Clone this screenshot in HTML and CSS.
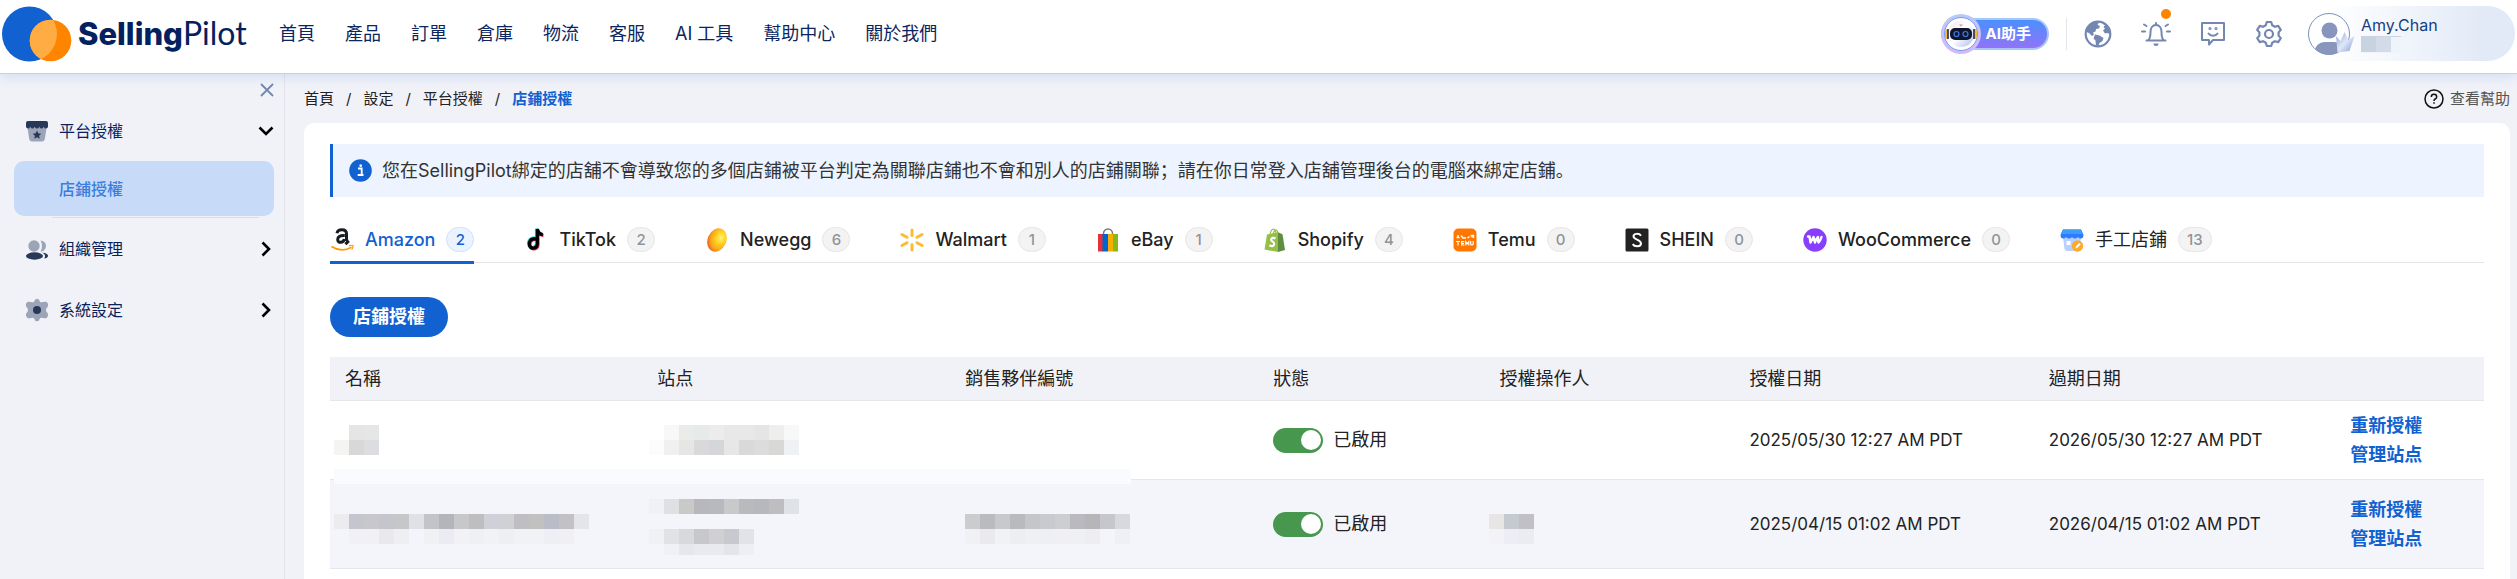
FILE: index.html
```html
<!DOCTYPE html>
<html lang="zh-Hant">
<head>
<meta charset="utf-8">
<title>店鋪授權 - SellingPilot</title>
<link rel="stylesheet" href="styles.css">
</head>
<body>
<header class="topbar">
  <a class="logo" href="#" aria-label="SellingPilot">
    <svg class="logo-mark" width="70" height="56" viewBox="0 0 70 56">
      <defs><clipPath id="blueClip"><circle cx="27.500" cy="28" r="27.500"/></clipPath></defs>
      <circle cx="27.500" cy="28" r="27.500" fill="#1161d0"/>
      <circle cx="48.500" cy="34.500" r="20.800" fill="#ff8400"/>
      <circle cx="48.500" cy="34.500" r="20.800" fill="#ffac45" clip-path="url(#blueClip)"/>
    </svg>
    <span class="logo-text"><b>Selling</b><span class="logo-light">Pilot</span></span>
  </a>
  <nav class="nav">
    <a href="#">首頁</a><a href="#">產品</a><a href="#">訂單</a><a href="#">倉庫</a><a href="#">物流</a><a href="#">客服</a><a href="#">AI 工具</a><a href="#">幫助中心</a><a href="#">關於我們</a>
  </nav>
  <div class="tools">
    <button class="ai" type="button">
      <svg class="ai-bot" width="40" height="40" viewBox="0 0 40 40">
        <defs>
          <linearGradient id="ring" x1="0" y1="0" x2="0" y2="1"><stop offset="0" stop-color="#b9c9f7"/><stop offset="1" stop-color="#d6b9f4"/></linearGradient>
          <linearGradient id="skin" x1="0" y1="0" x2="1" y2="1"><stop offset="0" stop-color="#f6e6ee"/><stop offset=".5" stop-color="#fff"/><stop offset="1" stop-color="#a9b8ea"/></linearGradient>
        </defs>
        <circle cx="20" cy="20" r="20" fill="url(#ring)"/>
        <circle cx="20" cy="20" r="16.500" fill="#fff" stroke="#6f9dfb"/>
        <rect x="4" y="15" width="4" height="10" rx="2" fill="#f3b544"/>
        <rect x="32" y="15" width="4" height="10" rx="2" fill="#f3b544"/>
        <circle cx="20" cy="20" r="13" fill="url(#skin)"/>
        <path d="M7 15v10M33 15v10" stroke="#1b2348" stroke-width="1.500"/>
        <path d="M18 10.500h4l-2 2z" fill="#9aa7cf"/>
        <rect x="9" y="14" width="22" height="12" rx="5" fill="#10162f"/>
        <circle cx="15.500" cy="20" r="2.500" fill="none" stroke="#3f7be0" stroke-width="1.200"/>
        <circle cx="24.500" cy="20" r="2.500" fill="none" stroke="#3f7be0" stroke-width="1.200"/>
      </svg>
      <span>AI助手</span>
    </button>
    <span class="divider"></span>
    <button class="tool" type="button" aria-label="語言">
      <svg width="28" height="28" viewBox="0 0 28 28"><circle cx="14" cy="14" r="12.300" fill="none" stroke="#7487b1" stroke-width="2.200"/><path d="M2 12c1-5 5-9 9-10l4 .5-1.500 2.500 2.500 1-1 2.500-3 .5-.5 2.500-2.500 1 1 2-2 1.500-3-3-2.500-1zM18 2.500l4 1.500 4 5v5l-3-1-2 .5-2-3 2-2-1.500-1.500 1.500-2-2.500-1zM11 14.500l4.500 1 4 2.500-1 3-3 2-1.500 3.500-2-.5-.5-5.500-2-2z" fill="#7487b1"/></svg>
    </button>
    <button class="tool" type="button" aria-label="通知">
      <svg width="30" height="28" viewBox="0 0 30 28" fill="none" stroke="#7487b1" stroke-width="2" stroke-linecap="round" stroke-linejoin="round"><path d="M5.500 20.500h19M7.500 20c2-2 2-4 2-8 0-4 2-7 5.500-7s5.500 3 5.500 7c0 4 0 6 2 8M15 3v1.500M1 11.500h3M26 11.500h3M3 4.500l2.500 1.500M27 4.500l-2.500 1.500"/><path d="M12.500 23.500h5a2.500 2.500 0 0 1-5 0z" fill="#7487b1" stroke="none"/></svg>
      <span class="dot"></span>
    </button>
    <button class="tool" type="button" aria-label="回饋">
      <svg width="26" height="28" viewBox="0 0 26 28" fill="none" stroke="#7487b1" stroke-width="2" stroke-linejoin="round" stroke-linecap="round"><path d="M2 3h22v17h-11l-4 4.500v-4.500H2z"/><path d="M8.500 13.500c2 3 7 3 9 0"/><circle cx="10" cy="8.500" r=".6"/><circle cx="16" cy="8.500" r=".6"/></svg>
    </button>
    <button class="tool" type="button" aria-label="設定">
      <svg width="28" height="28" viewBox="0 0 28 28" fill="none" stroke="#7487b1" stroke-width="2.200" stroke-linejoin="round"><path d="M11.800 2h4.400l1 3.300 2.700 1.500 3.300-.9 2.600 3.900-2.200 2.600v3.200l2.200 2.600-2.600 3.900-3.300-.9-2.700 1.500-1 3.300h-4.400l-1-3.300-2.700-1.500-3.300.9-2.600-3.900 2.200-2.600v-3.200L2.200 9.800l2.600-3.900 3.300.9 2.700-1.500z"/><circle cx="14" cy="14" r="4"/></svg>
    </button>
    <div class="user">
      <svg width="50" height="44" viewBox="0 0 50 44">
        <defs>
          <clipPath id="face"><circle cx="21" cy="22" r="20.500"/></clipPath>
          <linearGradient id="crown" x1="0" y1="0" x2="1" y2="1"><stop offset="0" stop-color="#8fa3d3"/><stop offset=".5" stop-color="#dfe7fa"/><stop offset="1" stop-color="#8799cc"/></linearGradient>
        </defs>
        <circle cx="21" cy="22" r="20.500" fill="#fff" stroke="#7d90bd"/>
        <circle cx="21.500" cy="18.500" r="8" fill="#8896bd"/>
        <path d="M6 44c0-10 5-14 11-14h9c6 0 11 4 11 14z" fill="#8896bd" clip-path="url(#face)"/>
        <path d="M28 24l4.500 5 4-9 4 8 6-4-5 15-12 1.500z" fill="url(#crown)"/>
      </svg>
      <div class="user-info">
        <span>Amy.Chan</span>
        <svg class="user-tag" width="40" height="17" viewBox="0 0 40 17"><rect width="40" height="17" fill="#eff3fa"/><rect width="15" height="16" fill="#c7d3e1"/><rect x="15" width="15" height="16" fill="#d3dae8"/><rect width="40" height="1" fill="#ccd3e2"/></svg>
      </div>
    </div>
  </div>
</header>

<div class="layout">
  <aside class="sidebar">
    <button class="close" type="button" aria-label="收起"><svg width="14" height="14" viewBox="0 0 14 14" stroke="#7487b1" stroke-width="1.800"><path d="M1 1l12 12M13 1L1 13"/></svg></button>
    <ul class="menu">
      <li>
        <a class="menu-item" href="#">
          <svg width="24" height="24" viewBox="0 0 24 24"><path d="M2.500 9h19l-1.700 11q-.5 2.500-3 2.500H7.200q-2.500 0-3-2.500z" fill="#9ca5b8"/><path d="M3 2h18q2 0 2 2v3.500q0 2-2.200 2-1 0-2-1.200-1 1.200-2.300 1.200T14.300 8.300Q13.300 9.500 12 9.500T9.700 8.300Q8.700 9.500 7.500 9.500T5.200 8.300Q4.200 9.500 3.200 9.500 1 9.500 1 7.500V4q0-2 2-2z" fill="#283858"/><path d="M12 11.500l1.300 2.800 3 .4-2.200 2.100.6 3-2.700-1.500-2.700 1.500.6-3-2.200-2.100 3-.4z" fill="#283858"/></svg>
          <span>平台授權</span>
          <svg class="chev" width="16" height="16" viewBox="0 0 16 16"><path d="M1.500 4.500L8 11l6.500-6.500"/></svg>
        </a>
        <a class="submenu" href="#">店鋪授權</a>
      </li>
      <li class="ruled">
        <a class="menu-item" href="#">
          <svg width="24" height="24" viewBox="0 0 24 24"><circle cx="9" cy="9" r="5.700" fill="#9ca5b8"/><path d="M15.500 3.500a5.500 5.500 0 0 1 0 11c2-3.500 2-7.500 0-11z" fill="#9ca5b8"/><ellipse cx="9.500" cy="19" rx="8.500" ry="3.700" fill="#283858"/><path d="M17 15.500c4 .3 6 1.800 6 3.300s-1 2.500-4 2.800c2-2.200 1-4.500-2-6.100z" fill="#283858"/></svg>
          <span>組織管理</span>
          <svg class="chev" width="16" height="16" viewBox="0 0 16 16"><path d="M4.500 1.500L11 8l-6.500 6.500"/></svg>
        </a>
      </li>
      <li>
        <a class="menu-item" href="#">
          <svg width="24" height="24" viewBox="0 0 24 24"><path d="M12 .7q2.200 0 3 3 .7 1 3 .4 2.700-.7 3.700 0 1.700 1.400 1.400 3.600-.3 1.400-1.500 2.300-1.300 2 0 4 1.200.9 1.500 2.300.3 2.200-1.400 3.600-1 .7-3.700 0-2.300-.6-3 .4-.8 3-3 3t-3-3q-.7-1-3-.4-2.700.7-3.700 0Q.6 18.500.9 16.300 1.200 14.900 2.400 14q1.300-2 0-4Q1.200 9.100.9 7.700.6 5.500 2.300 4.100q1-.7 3.700 0 2.300.6 3-.4.8-3 3-3z" fill="#9ca5b8"/><circle cx="12" cy="12" r="4" fill="#283858"/></svg>
          <span>系統設定</span>
          <svg class="chev" width="16" height="16" viewBox="0 0 16 16"><path d="M4.500 1.500L11 8l-6.500 6.500"/></svg>
        </a>
      </li>
    </ul>
  </aside>

  <main class="main">
    <div class="crumb-row">
      <nav class="crumbs"><a href="#">首頁</a><span>/</span><a href="#">設定</a><span>/</span><a href="#">平台授權</a><span>/</span><a class="current" href="#">店鋪授權</a></nav>
      <a class="help" href="#"><svg width="20" height="20" viewBox="0 0 20 20" fill="none" stroke="#111" stroke-width="1.500"><circle cx="10" cy="10" r="9"/><path d="M7.300 8q0-2.700 2.700-2.700T12.700 8q0 1.300-1.500 2-1.200.6-1.200 2"/><path d="M10 13.200v1.600"/></svg>查看幫助</a>
    </div>

    <section class="panel">
      <div class="notice">
        <svg width="23" height="23" viewBox="0 0 23 23"><circle cx="11.500" cy="11.500" r="11.300" fill="#1161d0"/><path d="M9 9.500h3.700v6M8.700 16h5.800" stroke="#fff" stroke-width="1.800" fill="none"/><rect x="10.500" y="5.500" width="2.400" height="2.300" fill="#fff"/></svg>
        <p lang="zh-Hans">您在SellingPilot綁定的店舖不會導致您的多個店鋪被平台判定為關聯店鋪也不會和別人的店鋪關聯；請在你日常登入店舖管理後台的電腦來綁定店鋪。</p>
      </div>

      <div class="tabs" role="tablist">
        <button class="tab active" role="tab" type="button"><svg width="24" height="24" viewBox="0 0 24 24" fill="none"><path d="M7 5.200C7.300 2.700 9.300 1.700 12 1.700c3 0 4.500 1.400 4.500 4.100v5.200c0 1.300.5 1.900 1.300 2.900l-2.400 2.200M14.800 7.500C9.500 7.300 7.700 9 7.700 11.700c0 3.700 5.800 3.600 6.600-.7" stroke="#161c22" stroke-width="3"/><path d="M1.500 18.500q10 6.500 20 .8" stroke="#ff9900" stroke-width="1.800"/><path d="M19 17.700q3.600-.8 4-.1.400 1-1.200 3.900" stroke="#ff9900" stroke-width="1.300"/></svg><span>Amazon</span><span class="count">2</span></button>
        <button class="tab" role="tab" type="button"><svg width="24" height="24" viewBox="0 0 24 24" fill="none" stroke-width="3.300"><path d="M11 10C5 9.500 3.800 14 4.700 16.500c1.300 4.500 7.800 3.500 7.800-1.500V.5c.4 3 2.300 5 5.500 5.500" stroke="#25f4ee"/><path d="M12.500 11.500C6.500 11 5.300 15.500 6.200 18c1.300 4.500 7.800 3.500 7.800-1.500V2c.4 3 2.300 5 5.500 5.500" stroke="#fe2c55"/><path d="M11.800 10.800C5.800 10.300 4.600 14.800 5.500 17.300c1.300 4.500 7.800 3.500 7.800-1.500V1c.4 3.300 2.300 5.300 5.500 5.700" stroke="#000"/></svg><span>TikTok</span><span class="count">2</span></button>
        <button class="tab" role="tab" type="button"><svg width="24" height="24" viewBox="0 0 24 24"><defs><radialGradient id="egg" cx=".65" cy=".35" r=".75"><stop offset="0" stop-color="#fff27a"/><stop offset=".35" stop-color="#ffd21f"/><stop offset=".7" stop-color="#f9a51a"/><stop offset="1" stop-color="#e8531c"/></radialGradient></defs><ellipse cx="12" cy="12" rx="9.300" ry="12" fill="url(#egg)" transform="rotate(24 12 12)"/></svg><span>Newegg</span><span class="count">6</span></button>
        <button class="tab" role="tab" type="button"><svg width="24" height="24" viewBox="0 0 24 24" stroke="#fdbb30" stroke-width="3" stroke-linecap="round"><path d="M12 2v5.500M12 16.500V22M2 6.500L7 9.300M17 14.700l5 2.800M22 6.500l-5 2.800M7 14.700l-5 2.800"/></svg><span>Walmart</span><span class="count">1</span></button>
        <button class="tab" role="tab" type="button"><svg width="24" height="24" viewBox="0 0 24 24"><path d="M7.500 8V5.500a4.500 4.500 0 0 1 9 0V8" fill="none" stroke="#777" stroke-width="1.500"/><path d="M2 6h5v17.500H2z" fill="#e53238"/><path d="M6.500 6H12v17.500H6.500z" fill="#0064d2"/><path d="M12 6h5v17.500h-5z" fill="#f5af02"/><path d="M17 6h5v17.500h-5z" fill="#86b817"/></svg><span>eBay</span><span class="count">1</span></button>
        <button class="tab" role="tab" type="button"><svg width="24" height="24" viewBox="0 0 24 24"><path d="M4 6.500l11-2.300V24L1.500 21.500z" fill="#95bf47"/><path d="M15 4.200l4.500 2 2.500 15.800-7 2z" fill="#5e8e3e"/><path d="M7 6.500C8 .5 12-1 13 5M10 6c1-4 4-6 5-1" fill="none" stroke="#95bf47" stroke-width="1.200"/><path d="M12.500 10.500c-2-1.300-4.300-.7-4.300 1.200 0 2 3.300 2.100 3 4.500-.3 2.300-2.800 2.600-4.700 1" stroke="#fff" stroke-width="2.200" fill="none"/></svg><span>Shopify</span><span class="count">4</span></button>
        <button class="tab" role="tab" type="button"><svg width="24" height="24" viewBox="0 0 24 24"><rect x=".5" y=".5" width="23" height="23" rx="5" fill="#ff7700"/><path d="M3.500 9.500h3M5 7v3M8 7.500l2 2.500h3M14.500 10l2-1.500M17.500 7.500h3v2.500M19 7.500v2" stroke="#fff" stroke-width="1.400" fill="none"/><path d="M3 13.500h4M5 13.500v4M11.300 13.500H8.700v3.500h2.600M8.700 15.300h2.300M12.800 17.500v-3.800l1.500 2 1.500-2v3.800M17.700 13v3q0 1 1.200 1t1.300-1v-3" stroke="#fff" stroke-width="1.200" fill="none"/></svg><span>Temu</span><span class="count">0</span></button>
        <button class="tab" role="tab" type="button"><svg width="24" height="24" viewBox="0 0 24 24"><rect x=".5" y=".5" width="23" height="23" rx="1.500" fill="#222"/><path d="M16 7.800C14.500 5.300 8.500 5 8.500 8.300c0 3.700 7.500 2.900 7.500 7.200 0 3.500-6.500 3.500-8.300.6" fill="none" stroke="#fff" stroke-width="2"/></svg><span>SHEIN</span><span class="count">0</span></button>
        <button class="tab" role="tab" type="button"><svg width="24" height="24" viewBox="0 0 24 24"><circle cx="12" cy="12" r="11.700" fill="#873eff"/><path d="M5 8.500h1.500l1 6 3-5.500 1.500 5.500q1-4 3-5.500-.5 3.500.5 5.500 2-2 3-5.500" fill="none" stroke="#fff" stroke-width="2.400" stroke-linejoin="round" stroke-linecap="round"/></svg><span>WooCommerce</span><span class="count">0</span></button>
        <button class="tab" role="tab" type="button"><svg width="24" height="24" viewBox="0 0 24 24"><path d="M3 9h18l-1.500 12q-.3 2-2.500 2H7q-2.200 0-2.500-2z" fill="#b7d0ff"/><path d="M3 1.500h18L23.500 7q0 3.500-2.800 3.500-1.700 0-2.900-1.500-1 1.500-2.900 1.500T12 9q-1 1.500-2.900 1.500T6.200 9Q5 10.500 3.300 10.500.5 10.500.5 7z" fill="#2f7bff"/><path d="M3 1.500h18L23 6H1z" fill="#3f9df5"/><rect x="6.500" y="13" width="4" height="4" fill="#fff"/><circle cx="17.500" cy="18" r="5.700" fill="#ffaa24"/><path d="M15.500 20.500l.7-2.500 3-3 1.500 1.500-3 3z" fill="#fff"/></svg><span class="plain">手工店鋪</span><span class="count">13</span></button>
      </div>

      <button class="primary" type="button">店鋪授權</button>

      <div class="table-wrap">
        <div class="band"></div>
        <table>
          <colgroup><col class="c-name"><col class="c-site"><col class="c-partner"><col class="c-state"><col class="c-operator"><col class="c-start"><col class="c-end"><col class="c-action"></colgroup>
          <thead><tr><th>名稱</th><th>站点</th><th>銷售夥伴編號</th><th>狀態</th><th>授權操作人</th><th>授權日期</th><th>過期日期</th><th></th></tr></thead>
          <tbody>
            <tr class="first">
              <td class="masked"><svg class="mosaic" width="45" height="30"><rect x="15" fill="#e5e5e5"/><rect x="30" fill="#e4e7e6"/><rect y="15" fill="#f4f4f2"/><rect x="15" y="15" fill="#d8d8d8"/><rect x="30" y="15" fill="#dcdde0"/></svg></td>
              <td class="masked site"><svg class="mosaic" width="150" height="30"><rect x="15" fill="#f8f8f8"/><rect x="30" fill="#ebebe9"/><rect x="45" fill="#e6eae8"/><rect x="60" fill="#ececec"/><rect x="75" fill="#e8e8e8"/><rect x="90" fill="#e8e8e6"/><rect x="105" fill="#e5e5e5"/><rect x="120" fill="#eee"/><rect x="135" fill="#f7f9f8"/><rect y="15" fill="#fcfcfa"/><rect x="15" y="15" fill="#f0f0f0"/><rect x="30" y="15" fill="#e6e6e4"/><rect x="45" y="15" fill="#d9d9d9"/><rect x="60" y="15" fill="#d5d6d9"/><rect x="75" y="15" fill="#e7e7e7"/><rect x="90" y="15" fill="#d9d9d9"/><rect x="105" y="15" fill="#dcdcdc"/><rect x="120" y="15" fill="#d8d8d6"/><rect x="135" y="15" fill="#f0f1f3"/></svg></td>
              <td></td>
              <td><label class="switch"><input type="checkbox" checked><span>已啟用</span></label></td>
              <td></td>
              <td class="date">2025/05/30 12:27 AM PDT</td>
              <td class="date">2026/05/30 12:27 AM PDT</td>
              <td class="actions"><a href="#">重新授權</a><a href="#">管理站点</a></td>
            </tr>
            <tr class="second">
              <td class="masked"><svg class="mosaic" width="255" height="60"><g transform="translate(0 15)"><rect fill="#ececee"/><rect x="15" fill="#c5c6cd"/><rect x="30" fill="#c7c7cc"/><rect x="45" fill="#c5c6cc"/><rect x="60" fill="#c7c7ca"/><rect x="75" fill="#e0e1e6"/><rect x="90" fill="#c3c3c8"/><rect x="105" fill="#b3b5ba"/><rect x="120" fill="#c8c8ca"/><rect x="135" fill="#bebec0"/><rect x="150" fill="#d0d1d8"/><rect x="165" fill="#d0d1d5"/><rect x="180" fill="#bfbfc1"/><rect x="195" fill="#c1c1c0"/><rect x="210" fill="#babdc8"/><rect x="225" fill="#c2c2c4"/><rect x="240" fill="#e4e5ea"/><rect x="15" y="15" fill="#f1f0f4"/><rect x="30" y="15" fill="#f1f0f4"/><rect x="45" y="15" fill="#e9e8ed"/><rect x="60" y="15" fill="#eeeff3"/><rect x="90" y="15" fill="#f0f1f4"/><rect x="105" y="15" fill="#ebecf1"/><rect x="120" y="15" fill="#f2f1f5"/><rect x="135" y="15" fill="#eff0f4"/><rect x="150" y="15" fill="#f1f2f6"/><rect x="165" y="15" fill="#eeeff3"/><rect x="180" y="15" fill="#f1f2f6"/><rect x="195" y="15" fill="#f1f2f6"/><rect x="210" y="15" fill="#eeeff4"/><rect x="225" y="15" fill="#f0eff3"/></g></svg></td>
              <td class="masked site"><svg class="mosaic" width="150" height="60"><rect fill="#f0f1f5"/><rect x="15" fill="#dfe0e4"/><rect x="30" fill="#c9c9c8"/><rect x="45" fill="#b8b7bd"/><rect x="60" fill="#b8b9be"/><rect x="75" fill="#c9c9cb"/><rect x="90" fill="#b8babb"/><rect x="105" fill="#b7b8be"/><rect x="120" fill="#bebdbf"/><rect x="135" fill="#dfe3e8"/><g transform="translate(0 30)"><rect fill="#f0f1f5"/><rect x="15" fill="#e1e2e6"/><rect x="30" fill="#d8d9dd"/><rect x="45" fill="#c8c7cc"/><rect x="60" fill="#d0d0d2"/><rect x="75" fill="#c8c9cf"/><rect x="90" fill="#e2e3e7"/></g><g class="short" transform="translate(0 45)"><rect x="15" fill="#f1f0f5"/><rect x="30" fill="#e6e7eb"/><rect x="45" fill="#e9eaee"/><rect x="60" fill="#e9eaee"/><rect x="75" fill="#e4e5ea"/><rect x="90" fill="#eeeff4"/></g></svg></td>
              <td class="masked wide"><svg class="mosaic" width="165" height="60"><g transform="translate(0 15)"><rect fill="#ccccce"/><rect x="15" fill="#babbbe"/><rect x="30" fill="#c8c9cd"/><rect x="45" fill="#b9babc"/><rect x="60" fill="#c5c6c9"/><rect x="75" fill="#c9cad0"/><rect x="90" fill="#cdcecf"/><rect x="105" fill="#b9b9bf"/><rect x="120" fill="#b6b6b8"/><rect x="135" fill="#c6c7cc"/><rect x="150" fill="#d8d9df"/><rect y="15" fill="#f0f1f5"/><rect x="15" y="15" fill="#eae9ee"/><rect x="30" y="15" fill="#f1f2f6"/><rect x="45" y="15" fill="#edeef2"/><rect x="60" y="15" fill="#eff0f4"/><rect x="75" y="15" fill="#eeeff4"/><rect x="90" y="15" fill="#f0eff4"/><rect x="105" y="15" fill="#eff0f4"/><rect x="120" y="15" fill="#eeedf2"/><rect x="150" y="15" fill="#eff0f5"/></g></svg></td>
              <td><label class="switch"><input type="checkbox" checked><span>已啟用</span></label></td>
              <td class="masked"><svg class="mosaic" width="60" height="60"><g transform="translate(0 15)"><rect fill="#e7e6e5"/><rect x="15" fill="#c5cad1"/><rect x="30" fill="#c1c0c6"/><rect y="15" fill="#f2f2f7"/><rect x="15" y="15" fill="#edeef3"/><rect x="30" y="15" fill="#ebecf0"/></g></svg></td>
              <td class="date">2025/04/15 01:02 AM PDT</td>
              <td class="date">2026/04/15 01:02 AM PDT</td>
              <td class="actions"><a href="#">重新授權</a><a href="#">管理站点</a></td>
            </tr>
          </tbody>
        </table>
      </div>
    </section>
  </main>
</div>
</body>
</html>
```

FILE: styles.css
```css
* { box-sizing: border-box; }
body {
  margin: 0;
  min-height: 100vh;
  display: flex;
  flex-direction: column;
  background: #f1f2f8;
  color: #222;
  font: 18px/26px Inter, "Noto Sans CJK TC", sans-serif;
  overflow: hidden;
}
a { color: inherit; text-decoration: none; }
button { font: inherit; border: 0; background: none; padding: 0; color: inherit; cursor: pointer; }
svg { display: block; flex: none; }

.topbar {
  position: relative;
  display: flex;
  align-items: center;
  height: 74px;
  padding: 0 2px 6px;
  background: #fff;
  border-bottom: 1px solid #c3d3ea;
  box-shadow: 0 2px 12px rgba(17, 97, 208, .16);
}
.logo { display: flex; align-items: center; gap: 6px; width: 277px; color: #03215f; }
.logo-text { font-size: 31px; line-height: 36px; }
.logo-text b { font-weight: 800; }
.logo-light { font-family: Lato, sans-serif; font-size: 32px; }
.nav { display: flex; gap: 30px; color: #0b2560; }

.tools { display: flex; align-items: center; margin-left: auto; }
.ai {
  display: flex;
  align-items: center;
  gap: 5px;
  height: 32px;
  padding-right: 16px;
  border: 2px solid #a9c6fb;
  border-left: 0;
  border-radius: 16px;
  background: linear-gradient(#4a90ff, #9173f8);
  color: #fff;
  font-size: 15px;
  font-weight: 700;
}
.divider { width: 1px; height: 32px; margin: 0 17px; background: #e3e5ea; }
.tool { position: relative; margin-right: 29px; }
.dot { position: absolute; top: -11px; right: 0; width: 10px; height: 10px; border-radius: 50%; background: #ff8400; }
.user {
  display: flex;
  align-items: center;
  gap: 3px;
  width: 207px;
  height: 55px;
  margin-left: -4px;
  border-radius: 28px;
  background: linear-gradient(90deg, #fff 10%, #e2eaf7 85%);
}
.user-info { display: flex; flex-direction: column; align-items: flex-start; color: #173f80; font-size: 16px; line-height: 22px; }

.layout { flex: 1; display: flex; }
.sidebar { flex: none; width: 285px; padding: 9px 10px 0 14px; border-right: 1px solid #e3e4ea; }
.close { display: block; margin-left: auto; }
.menu { list-style: none; margin: 3px 0 0; padding: 0; }
.menu-item {
  display: flex;
  align-items: center;
  gap: 10px;
  height: 61px;
  padding: 0 0 0 11px;
  color: #0b1f58;
  font-size: 16px;
}
.chev { margin-left: auto; fill: none; stroke: #000; stroke-width: 2.6; }
.submenu {
  display: flex;
  align-items: center;
  height: 55px;
  margin-bottom: 1px;
  padding-left: 45px;
  border-radius: 10px;
  background: #c7dbf9;
  color: #3b7ddb;
  font-size: 16px;
  font-weight: 500;
}
.ruled::before { content: ""; display: block; height: 1px; margin: 0 15px 0 38px; background: #dcdde3; }

.main { flex: 1; display: flex; flex-direction: column; min-width: 0; padding: 0 7px 0 19px; }
.crumb-row { display: flex; justify-content: space-between; align-items: center; height: 49px; font-size: 15px; }
.crumbs { display: flex; gap: 12px; }
.current { color: #1161d0; font-weight: 700; }
.help { display: flex; align-items: center; gap: 6px; color: #555; }
.panel { flex: 1; padding: 21px 26px 0; border-radius: 10px 10px 0 0; background: #fff; }

.notice {
  display: flex;
  align-items: center;
  gap: 10px;
  height: 53px;
  padding-left: 16px;
  border-left: 3px solid #1161d0;
  background: #edf4ff;
  color: #333;
}
.notice p { margin: 0; font-family: Inter, "Noto Sans CJK SC", sans-serif; white-space: nowrap; }

.tabs { display: flex; gap: 50px; height: 66px; margin-bottom: 34px; padding-top: 17px; border-bottom: 1px solid #e6e6e8; }
.tab {
  display: flex;
  align-items: center;
  gap: 11px;
  height: 50px;
  padding-top: 4px;
  border-bottom: 3px solid transparent;
  font-weight: 500;
  white-space: nowrap;
}
.tab.active { color: #1161d0; border-color: #1161d0; }
.plain { font-weight: 400; }
.count {
  min-width: 28px;
  height: 25px;
  padding: 0 8px;
  border: 1px solid #e6e6e8;
  border-radius: 13px;
  background: #f3f3f4;
  color: #909399;
  font-size: 15px;
  line-height: 23px;
  text-align: center;
}
.active .count { border-color: #cfe2fc; background: #eaf3ff; color: #1161d0; }

.primary { display: block; height: 40px; margin-bottom: 20px; padding: 0 23px; border-radius: 20px; background: #1161d0; color: #fff; font-weight: 700; }

.table-wrap { position: relative; }
table { width: 100%; border-collapse: separate; border-spacing: 0; table-layout: fixed; }
th, td { padding: 0 0 0 15px; border-bottom: 1px solid #e4e6e9; text-align: left; font-weight: 400; }
th { height: 44px; background: #f1f2f8; }
.first td { height: 79px; }
.second td { height: 89px; background: #f4f5fa; }
.c-name { width: 14.5%; }
.c-site { width: 14.3%; }
.c-partner { width: 14.3%; }
.c-state { width: 10.5%; }
.c-operator { width: 11.6%; }
.c-start { width: 13.9%; }
.c-end { width: 14%; }
.masked { padding-left: 4px; }
.masked.site { padding-left: 7px; }
.masked.wide { padding-left: 15px; }
.mosaic rect { width: 15px; height: 15px; }
.mosaic .short rect { height: 11px; }
.second .masked { padding-top: 9px; }
.band { position: absolute; top: 112px; left: 4px; width: 37%; height: 15px; background: #fafbfe; }
.date { font-size: 17px; white-space: nowrap; }
.actions a { display: block; line-height: 29px; color: #1161d0; font-weight: 700; }

.switch { display: flex; align-items: center; gap: 10px; }
.switch input {
  appearance: none;
  display: flex;
  justify-content: flex-end;
  align-items: center;
  width: 50px;
  height: 25px;
  margin: 0;
  padding: 2px;
  border-radius: 13px;
  background: #47984e;
}
.switch input::after { content: ""; width: 20px; height: 20px; border-radius: 50%; background: #fff; }
```
